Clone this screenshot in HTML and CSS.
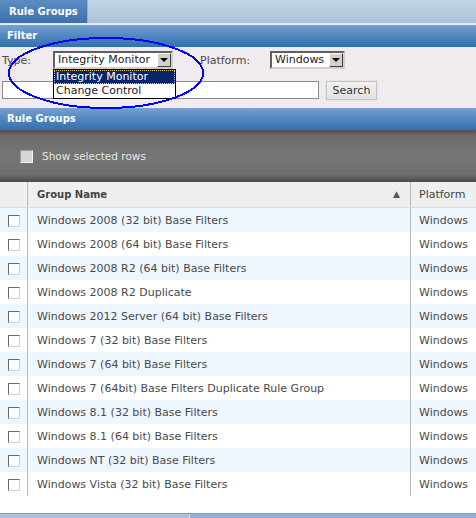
FILE: index.html
```html
<!DOCTYPE html>
<html lang="en">
<head>
    <meta charset="UTF-8">
    <title>Rule Groups</title>
    <link rel="stylesheet" href="styles.css">
</head>
<body>

    <div class="tabbar">
        <div class="tab">Rule Groups</div>
    </div>

    <div class="section-head">Filter</div>

    <div class="filter">
        <div class="filter-row">
            <span class="label type-label">Type:</span>
            <div class="combo combo-type">
                <span class="combo-value">Integrity Monitor</span>
                <span class="combo-btn"></span>
                <ul class="combo-list">
                    <li class="selected">Integrity Monitor</li>
                    <li>Change Control</li>
                </ul>
            </div>
            <span class="label platform-label">Platform:</span>
            <div class="combo combo-platform">
                <span class="combo-value">Windows</span>
                <span class="combo-btn"></span>
            </div>
        </div>
        <div class="filter-row search-row">
            <input type="text" class="search-box">
            <button class="search-btn">Search</button>
        </div>
        <!-- annotation circle drawn on top of the screenshot -->
        <svg class="marker" width="200" height="76" viewBox="0 0 200 76">
            <ellipse cx="99" cy="37" rx="97" ry="35" fill="none" stroke="#0000ff" stroke-width="2" shape-rendering="crispEdges"/>
        </svg>
    </div>

    <div class="section-head">Rule Groups</div>

    <div class="toolbar">
        <span class="tool-check"></span>
        <span>Show selected rows</span>
    </div>

    <table class="grid">
        <thead>
            <tr>
                <th class="col-check"></th>
                <th class="col-name">Group Name <span class="sort">&#9650;</span></th>
                <th class="col-platform">Platform</th>
            </tr>
        </thead>
        <tbody id="rows"></tbody>
    </table>

    <div class="footer"><div class="footer-left"></div></div>

    <script>
        var groups = [
            "Windows 2008 (32 bit) Base Filters",
            "Windows 2008 (64 bit) Base Filters",
            "Windows 2008 R2 (64 bit) Base Filters",
            "Windows 2008 R2 Duplicate",
            "Windows 2012 Server (64 bit) Base Filters",
            "Windows 7 (32 bit) Base Filters",
            "Windows 7 (64 bit) Base Filters",
            "Windows 7 (64bit) Base Filters Duplicate Rule Group",
            "Windows 8.1 (32 bit) Base Filters",
            "Windows 8.1 (64 bit) Base Filters",
            "Windows NT (32 bit) Base Filters",
            "Windows Vista (32 bit) Base Filters"
        ];

        var tbody = document.getElementById('rows');
        groups.forEach(function (name) {
            var tr = document.createElement('tr');
            tr.innerHTML = '<td class="col-check"><span class="box"></span></td>' +
                '<td class="col-name">' + name + '</td>' +
                '<td class="col-platform">Windows</td>';
            tbody.appendChild(tr);
        });
    </script>

</body>
</html>
```

FILE: styles.css
```css
body {
    margin: 0;
    width: 476px;
    height: 518px;
    overflow: hidden;
    background: #ffffff;
    font-family: "DejaVu Sans", Verdana, sans-serif;
    font-size: 11px;
    color: #4a4a4a;
}

.tabbar {
    height: 23px;
    display: flex;
    background: linear-gradient(#c4d6e6, #a9c2da);
    border-bottom: 1px solid #dfe9f3;
}

.tab {
    width: 78px;
    padding-left: 9px;
    line-height: 23px;
    font-size: 10px;
    color: #ffffff;
    font-weight: bold;
    background: linear-gradient(#5d8cc2, #3a70ad);
    border-right: 1px solid #8fb0d0;
}

.section-head {
    height: 22px;
    line-height: 22px;
    padding-left: 7px;
    font-size: 10px;
    color: #ffffff;
    font-weight: bold;
    background: linear-gradient(#76a1cf, #4d84c0 55%, #3270b0);
    border-top: 1px solid #e8eef5;
}

.filter {
    position: relative;
    height: 60px;
    padding: 4px 2px 0;
    box-sizing: border-box;
    background: #efebef;
}

.filter-row {
    display: flex;
    align-items: center;
    height: 18px;
}

.type-label {
    width: 51px;
}

.platform-label {
    width: 70px;
    margin-left: 27px;
}

.combo {
    position: relative;
    display: flex;
    height: 18px;
    box-sizing: border-box;
    background: #ffffff;
    border: 2px solid #5f5f5f;
    border-right-color: #cfcfcf;
    border-bottom-color: #cfcfcf;
}

.combo-type {
    width: 120px;
}

.combo-platform {
    width: 75px;
}

.combo-value {
    flex: 1;
    padding-left: 3px;
    line-height: 14px;
    color: #222222;
}

.combo-btn {
    width: 14px;
    height: 14px;
    box-sizing: border-box;
    background: #d4d0c8;
    border: 1px solid;
    border-color: #ffffff #404040 #404040 #ffffff;
    position: relative;
}

.combo-btn::after {
    content: "";
    position: absolute;
    left: 2px;
    top: 4px;
    border-left: 4px solid transparent;
    border-right: 4px solid transparent;
    border-top: 4px solid #000000;
}

.combo-list {
    position: absolute;
    top: 16px;
    left: -2px;
    width: 121px;
    margin: 0;
    padding: 0;
    list-style: none;
    background: #ffffff;
    border: 1px solid #000000;
    z-index: 2;
}

.combo-list li {
    height: 14px;
    line-height: 14px;
    padding-left: 2px;
    color: #222222;
}

.combo-list li.selected {
    background: #0a246a;
    color: #ffffff;
    outline: 1px dotted #e8d070;
    outline-offset: -1px;
}

.search-row {
    margin-top: 11px;
    height: 20px;
}

.search-box {
    width: 317px;
    height: 18px;
    margin: 0;
    box-sizing: border-box;
    border: 1px solid #8a8a8a;
    background: #ffffff;
}

.search-btn {
    margin-left: 7px;
    width: 51px;
    height: 19px;
    padding: 0;
    font-family: inherit;
    font-size: 11px;
    color: #333333;
    background: linear-gradient(#f2f2f2, #e2e2e2);
    border: 1px solid #c4c4c4;
    outline: 1px solid #e6e6e6;
}

.marker {
    position: absolute;
    left: 7px;
    top: -11px;
    z-index: 3;
}

.toolbar {
    height: 52px;
    display: flex;
    align-items: center;
    padding-left: 20px;
    box-sizing: border-box;
    font-size: 10.5px;
    color: #e4e4e4;
    background: linear-gradient(#505050, #6e6e6e 12%, #767576 50%, #6e6e6e 85%, #4c4c4c);
}

.tool-check {
    width: 11px;
    height: 11px;
    margin-right: 9px;
    background: #d6d5d2;
    border: 1px solid;
    border-color: #9c9c9c #f4f4f4 #f4f4f4 #9c9c9c;
}

.grid {
    width: 476px;
    border-collapse: collapse;
    table-layout: fixed;
}

.grid th {
    height: 25px;
    padding: 0;
    text-align: left;
    font-size: 10px;
    font-weight: bold;
    color: #444444;
    background: #efefef;
    border-bottom: 1px solid #dcdcdc;
}

.grid td {
    height: 24px;
    padding: 0;
}

.grid tbody tr:nth-child(odd) {
    background: #eef6fe;
}

.grid .col-check {
    width: 27px;
    border-right: 1px solid #b9b9b9;
    text-align: center;
}

.grid .col-name {
    padding-left: 9px;
    position: relative;
}

.grid th.col-platform {
    font-size: 11px;
    font-weight: normal;
}

.grid .col-platform {
    width: 57px;
    padding-left: 8px;
    border-left: 1px solid #b9b9b9;
}

.sort {
    position: absolute;
    right: 10px;
    top: 7px;
    font-size: 9px;
    color: #555555;
}

.box {
    display: inline-block;
    width: 10px;
    height: 10px;
    margin-left: 1px;
    vertical-align: middle;
    background: #ffffff;
    border: 1px solid;
    border-color: #6a6a6a #d0d0d0 #d0d0d0 #6a6a6a;
}

.footer {
    margin-top: 17px;
    height: 5px;
    background: #94b0d4;
    border-top: 1px solid #7a9ccc;
}

.footer-left {
    width: 189px;
    height: 5px;
    background: #a9c0de;
    border-right: 1px solid #c9d8ea;
}
```
